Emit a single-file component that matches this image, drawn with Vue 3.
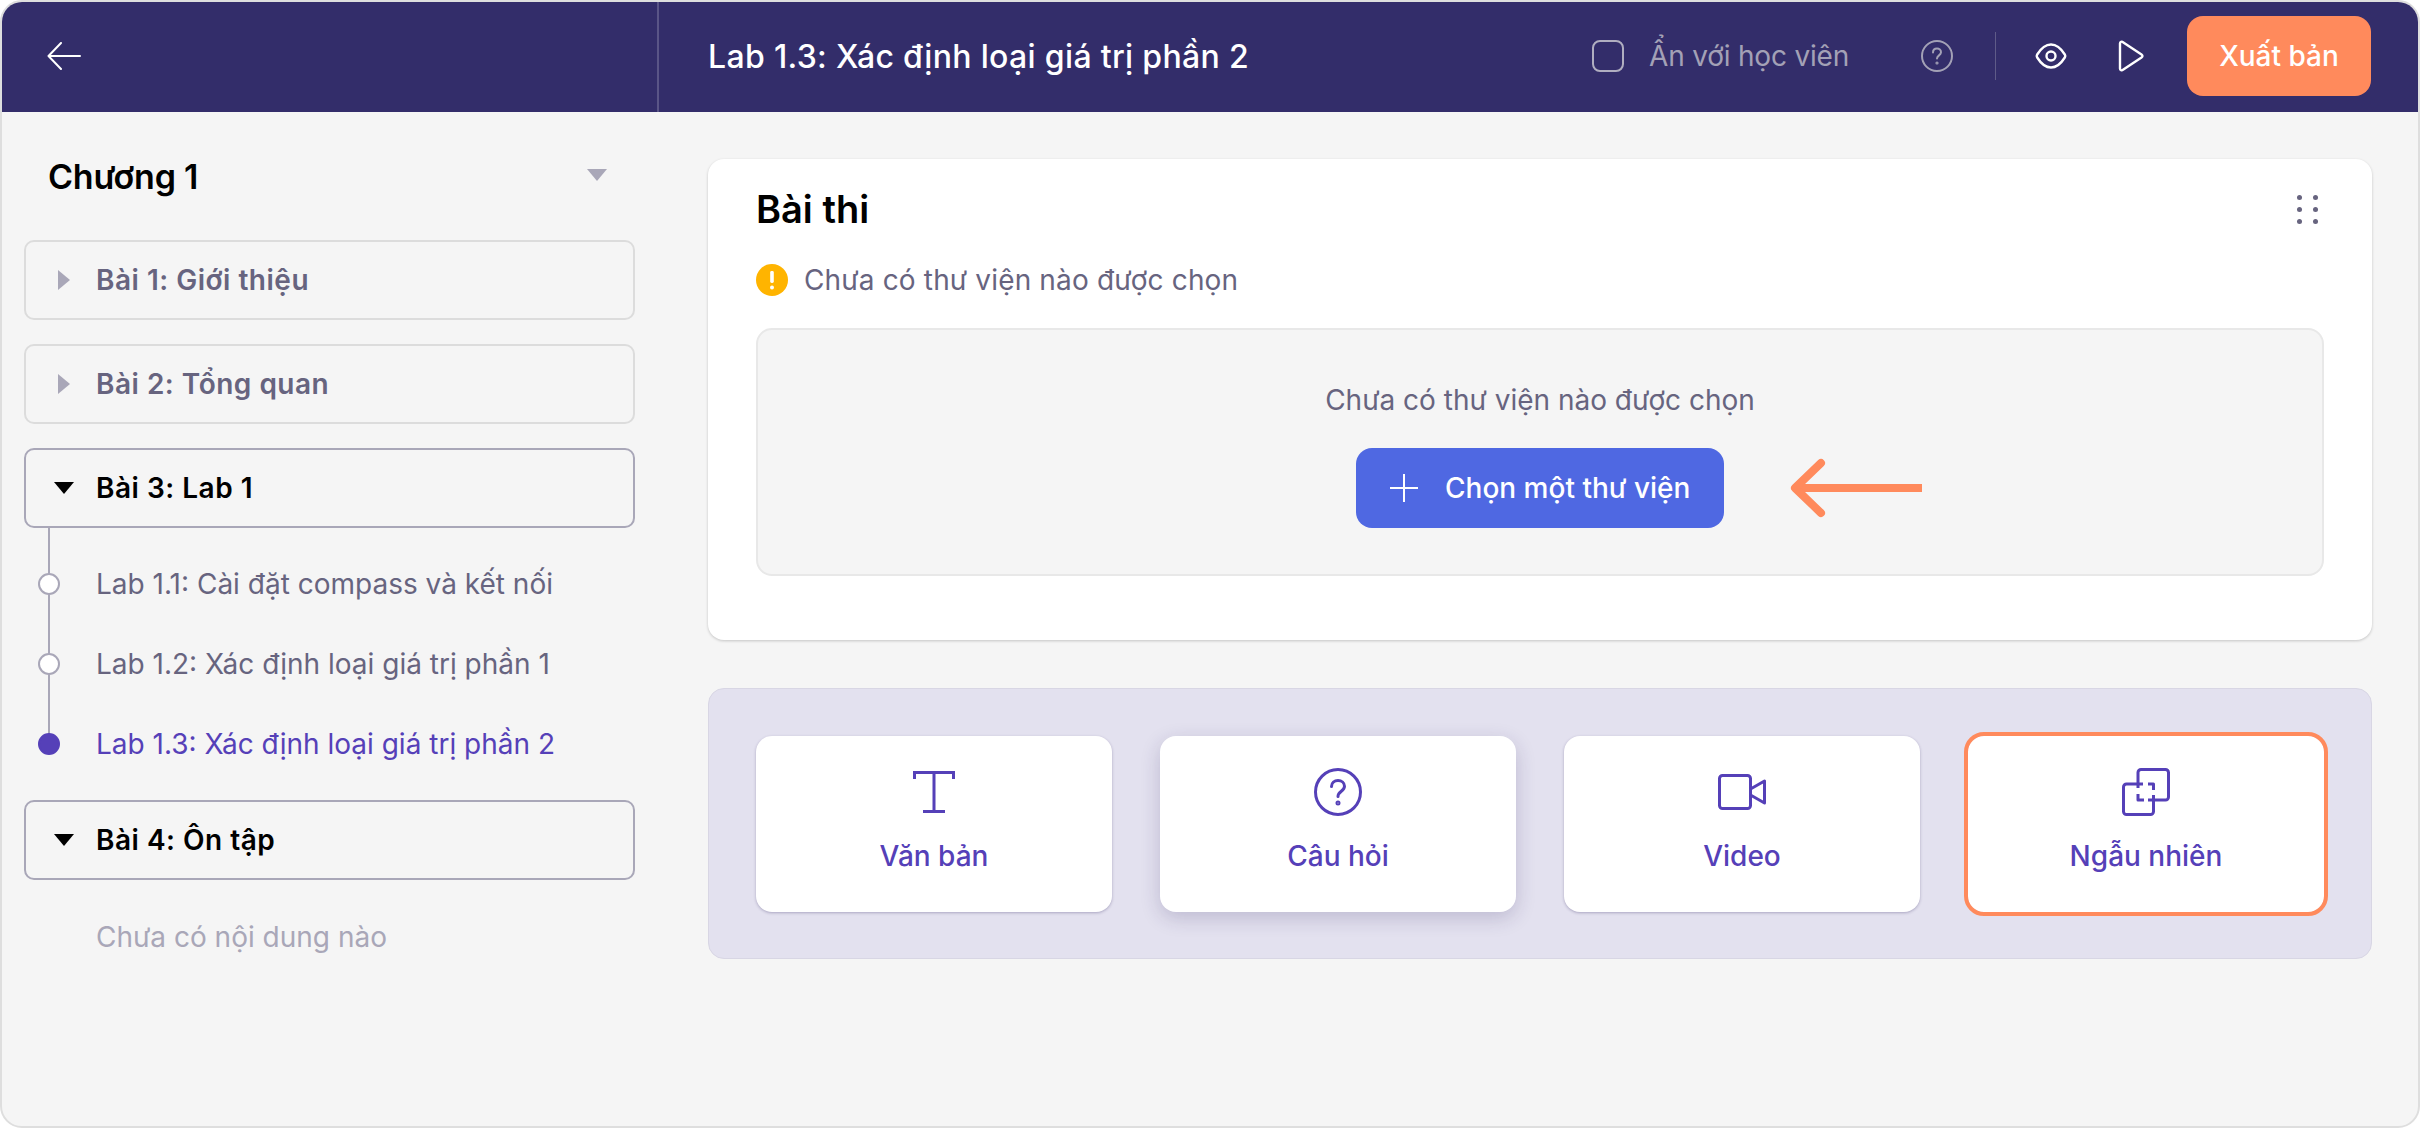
<template>
  <div class="frame">
    <header class="topbar">
      <div class="topbar-left">
        <svg class="back" width="34" height="28" viewBox="0 0 34 28" fill="none" stroke="#fff" stroke-width="2" stroke-linecap="round" stroke-linejoin="round">
          <path d="M33 14H2M14 1 1.500 14 14 27" />
        </svg>
      </div>
      <div class="topbar-main">
        <div class="page-title">Lab 1.3: Xác định loại giá trị phần 2</div>
        <div class="hide-toggle">
          <span class="checkbox"></span>
          <span>Ẩn với học viên</span>
        </div>
        <svg class="help" width="32" height="32" viewBox="0 0 32 32" fill="none" stroke="#a3a1b6" stroke-width="2" stroke-linecap="round">
          <circle cx="16" cy="16" r="15" />
          <path d="M12 12.500c0-2.500 1.800-4 4-4s4 1.500 4 3.800c0 3-4 3.200-4 6.200" />
          <circle cx="16" cy="23" r="0.600" />
        </svg>
        <span class="bar-divider"></span>
        <svg class="eye" width="32" height="26" viewBox="0 0 32 26" fill="none" stroke="#fff" stroke-width="2.400">
          <path d="M2.200 11.500C5 7 10 1.500 16 1.500S27 7 29.800 11.500a3 3 0 0 1 0 3C27 19 22 24.500 16 24.500S5 19 2.200 14.500a3 3 0 0 1 0-3Z" />
          <circle cx="16" cy="13" r="4.500" />
        </svg>
        <svg class="play" width="26" height="32" viewBox="0 0 26 32" fill="none" stroke="#fff" stroke-width="2.400" stroke-linejoin="round">
          <path d="M2 3.500C2 1.800 3.800 1 5 2.300L23.500 14.500C24.800 15.400 24.800 16.600 23.500 17.500L5 29.700C3.800 31 2 30.200 2 28.500Z" />
        </svg>
        <button class="publish">Xuất bản</button>
      </div>
    </header>

    <div class="body">
      <aside class="sidebar">
        <div class="chapter">
          <span class="chapter-name">Chương 1</span>
          <span class="tri-chapter"></span>
        </div>

        <div class="lesson">
          <span class="tri-right"></span>
          <span>Bài 1: Giới thiệu</span>
        </div>
        <div class="lesson">
          <span class="tri-right"></span>
          <span>Bài 2: Tổng quan</span>
        </div>
        <div class="lesson open">
          <span class="tri-down"></span>
          <span>Bài 3: Lab 1</span>
        </div>

        <div class="labs">
          <div v-for="lab in labs" :key="lab.name" class="lab" :class="{ current: lab.current }">
            <span class="dot"></span>
            <span>{{ lab.name }}</span>
          </div>
        </div>

        <div class="lesson open">
          <span class="tri-down"></span>
          <span>Bài 4: Ôn tập</span>
        </div>
        <div class="empty-note">Chưa có nội dung nào</div>
      </aside>

      <main class="content">
        <section class="exam-card">
          <div class="exam-head">
            <h2 class="exam-title">Bài thi</h2>
            <div class="grip">
              <i v-for="n in 6" :key="n"></i>
            </div>
          </div>
          <div class="warning">
            <svg width="32" height="32" viewBox="0 0 32 32">
              <circle cx="16" cy="16" r="16" fill="#ffb400" />
              <rect x="14.200" y="7" width="3.600" height="12" rx="1.400" fill="#fff" />
              <circle cx="16" cy="23.500" r="2" fill="#fff" />
            </svg>
            <span>Chưa có thư viện nào được chọn</span>
          </div>
          <div class="dropzone">
            <p class="dropzone-text">Chưa có thư viện nào được chọn</p>
            <div class="dropzone-action">
              <button class="choose">
                <svg width="28" height="28" viewBox="0 0 28 28" stroke="#fff" stroke-width="2">
                  <path d="M14 0v28M0 14h28" />
                </svg>
                <span>Chọn một thư viện</span>
              </button>
              <svg class="pointer" width="134" height="66" viewBox="0 0 134 66" fill="none" stroke="#ff8a5c" stroke-width="8" stroke-linecap="round" stroke-linejoin="round">
                <path d="M6 33H133" stroke-linecap="butt" />
                <path d="M32 8 6 33 32 58" />
              </svg>
            </div>
          </div>
        </section>

        <section class="blocks">
          <div class="tile">
            <svg class="text-icon" width="42" height="42" viewBox="0 0 42 42" fill="none" stroke="#5540b8" stroke-width="3">
              <path d="M1.500 8V1.500h39V8M21 1.500V41M10 40.500h22" />
            </svg>
            <span>Văn bản</span>
          </div>
          <div class="tile raised">
            <svg width="48" height="48" viewBox="0 0 48 48" fill="none" stroke="#5540b8" stroke-width="3" stroke-linecap="round">
              <circle cx="24" cy="24" r="22.500" />
              <path d="M17.500 18.500c0-3.800 3-6 6.500-6s6.500 2.300 6.500 5.800c0 5-6.500 5-6.500 10.200" />
              <circle cx="24" cy="35" r="1" />
            </svg>
            <span>Câu hỏi</span>
          </div>
          <div class="tile">
            <svg width="48" height="48" viewBox="0 0 48 48" fill="none" stroke="#5540b8" stroke-width="3" stroke-linejoin="round">
              <rect x="1.500" y="7.500" width="31" height="33" rx="3" />
              <path d="M32.500 21 46.500 13V35L32.500 27" />
            </svg>
            <span>Video</span>
          </div>
          <div class="tile picked">
            <svg width="48" height="48" viewBox="0 0 48 48" fill="none" stroke="#5540b8" stroke-width="3" stroke-linejoin="round">
              <path d="M16 20V4.500a3 3 0 0 1 3-3H43.500a3 3 0 0 1 3 3V29a3 3 0 0 1-3 3H26" />
              <path d="M21 16H4.500a3 3 0 0 0-3 3V43.500a3 3 0 0 0 3 3H28.500a3 3 0 0 0 3-3V27" />
              <path d="M26 16H31.500V22M16 26V32H22" />
            </svg>
            <span>Ngẫu nhiên</span>
          </div>
        </section>
      </main>
    </div>
  </div>
</template>

<script setup>
const labs = [
  { name: 'Lab 1.1: Cài đặt compass và kết nối' },
  { name: 'Lab 1.2: Xác định loại giá trị phần 1' },
  { name: 'Lab 1.3: Xác định loại giá trị phần 2', current: true },
]
</script>

<style>
html,
body {
  margin: 0;
  background: #fff;
}
</style>

<style scoped>
.frame {
  width: 2420px;
  height: 1128px;
  box-sizing: border-box;
  border: 2px solid #dedede;
  border-radius: 22px;
  overflow: hidden;
  background: #f5f5f5;
  font-family: Inter, "Noto Sans", sans-serif;
  font-size: 28px;
}

.topbar {
  display: flex;
  height: 110px;
  box-sizing: border-box;
  background: #332d6a;
}

.topbar-left {
  width: 657px;
  flex: none;
  box-sizing: border-box;
  border-right: 2px solid #5a5587;
  display: flex;
  align-items: center;
  padding: 0 0 2px 45px;
}

.topbar-main {
  flex: 1;
  display: flex;
  align-items: center;
  padding: 0 47px 2px 49px;
}

.page-title {
  color: #fff;
  font-size: 32px;
  font-weight: 500;
  letter-spacing: 0.33px;
  flex: 1;
}

.hide-toggle {
  display: flex;
  align-items: center;
  gap: 25px;
  color: #a3a1b6;
  letter-spacing: -0.2px;
}

.checkbox {
  width: 32px;
  height: 32px;
  box-sizing: border-box;
  border: 2px solid #b0aec0;
  border-radius: 8px;
}

.help {
  margin-left: 72px;
}

.bar-divider {
  width: 1px;
  height: 48px;
  margin: 0 39px 0 42px;
  background: #5f5b88;
}

.play {
  margin-left: 51px;
}

.publish {
  margin-left: 43px;
  width: 184px;
  height: 80px;
  border: 0;
  border-radius: 16px;
  background: #ff8a5c;
  color: #fff;
  font: 500 28px Inter, sans-serif;
}

.body {
  display: flex;
}

.sidebar {
  width: 657px;
  flex: none;
  box-sizing: border-box;
  padding: 0 24px 0 22px;
}

.chapter {
  height: 128px;
  display: flex;
  align-items: center;
  justify-content: space-between;
  padding: 0 28px 0 24px;
}

.chapter-name {
  color: #000;
  font-size: 34px;
  font-weight: 600;
  letter-spacing: -0.2px;
}

.tri-chapter {
  width: 0;
  height: 0;
  border-left: 10px solid transparent;
  border-right: 10px solid transparent;
  border-top: 12px solid #a9a7b8;
  margin-top: -2px;
}

.lesson {
  height: 80px;
  box-sizing: border-box;
  border: 2px solid #dcdcdc;
  border-radius: 10px;
  display: flex;
  align-items: center;
  margin-bottom: 24px;
  padding-left: 32px;
  color: #67647f;
  font-weight: 600;
  letter-spacing: 0.5px;
}

.lesson.open {
  border-color: #a9a7b8;
  color: #000;
  margin-bottom: 0;
  padding-left: 28px;
}

.tri-right {
  width: 0;
  height: 0;
  border-top: 10px solid transparent;
  border-bottom: 10px solid transparent;
  border-left: 12px solid #a9a7b8;
  margin-right: 26px;
}

.tri-down {
  width: 0;
  height: 0;
  border-left: 10px solid transparent;
  border-right: 10px solid transparent;
  border-top: 12px solid #000;
  margin-right: 22px;
}

.labs {
  position: relative;
  height: 272px;
  padding-left: 72px;
}

.labs::before {
  content: "";
  position: absolute;
  left: 24px;
  top: 0;
  height: 216px;
  width: 2px;
  background: #a9a7b8;
}

.lab {
  position: relative;
  height: 80px;
  display: flex;
  align-items: center;
  color: #67647f;
  top: 16px;
}

.lab.current {
  color: #5540b8;
}

.dot {
  position: absolute;
  left: -58px;
  top: 29px;
  width: 22px;
  height: 22px;
  box-sizing: border-box;
  border: 2px solid #a9a7b8;
  border-radius: 50%;
  background: #fff;
}

.current .dot {
  border-color: #5540b8;
  background: #5540b8;
}

.empty-note {
  padding: 40px 0 0 72px;
  color: #a9a7b8;
}

.content {
  flex: 1;
  padding: 47px 46px 0 49px;
}

.exam-card {
  height: 481px;
  box-sizing: border-box;
  padding: 0 48px;
  background: #fff;
  border-radius: 16px;
  box-shadow: 0 1px 3px rgba(0, 0, 0, 0.2);
}

.exam-head {
  height: 100px;
  display: flex;
  align-items: center;
  justify-content: space-between;
  padding-right: 6px;
}

.exam-title {
  margin: 0;
  color: #000;
  font-size: 38px;
  font-weight: 600;
}

.grip {
  display: grid;
  grid-template-columns: 5px 5px;
  column-gap: 11px;
  row-gap: 7px;
}

.grip i {
  width: 5px;
  height: 5px;
  border-radius: 50%;
  background: #67647f;
}

.warning {
  display: flex;
  align-items: center;
  gap: 16px;
  height: 32px;
  margin-top: 5px;
  color: #67647f;
  letter-spacing: 0.15px;
}

.dropzone {
  margin-top: 32px;
  height: 248px;
  box-sizing: border-box;
  border: 2px solid #e8e8e8;
  border-radius: 16px;
  background: #f5f5f5;
  text-align: center;
}

.dropzone-text {
  margin: 54px 0 0;
  color: #67647f;
  line-height: 32px;
}

.dropzone-action {
  position: relative;
  width: 368px;
  margin: 32px auto 0;
}

.choose {
  width: 368px;
  height: 80px;
  border: 0;
  border-radius: 16px;
  background: #4f68e2;
  color: #fff;
  font: 500 28px Inter, sans-serif;
  display: flex;
  align-items: center;
  gap: 27px;
  padding: 0 0 0 34px;
}

.pointer {
  position: absolute;
  left: 433px;
  top: 7px;
}

.blocks {
  margin-top: 48px;
  height: 271px;
  box-sizing: border-box;
  border: 1px solid #d8d6e4;
  border-radius: 16px;
  background: #e3e1ef;
  padding: 47px 46px 47px 47px;
  display: grid;
  grid-template-columns: repeat(4, 356px);
  column-gap: 48px;
  align-items: start;
}

.tile {
  height: 176px;
  box-sizing: border-box;
  padding-top: 32px;
  background: #fff;
  border-radius: 16px;
  box-shadow: 0 1px 3px rgba(40, 30, 90, 0.3);
  display: flex;
  flex-direction: column;
  align-items: center;
  color: #5540b8;
  font-weight: 500;
  position: relative;
}

.tile .text-icon {
  margin-top: 3px;
}

.tile span {
  position: absolute;
  top: 104px;
  line-height: 32px;
}

.tile.raised {
  box-shadow: 0 6px 20px rgba(40, 30, 90, 0.2);
}

.tile.picked {
  outline: 4px solid #ff8a5c;
  box-shadow: none;
}
</style>
